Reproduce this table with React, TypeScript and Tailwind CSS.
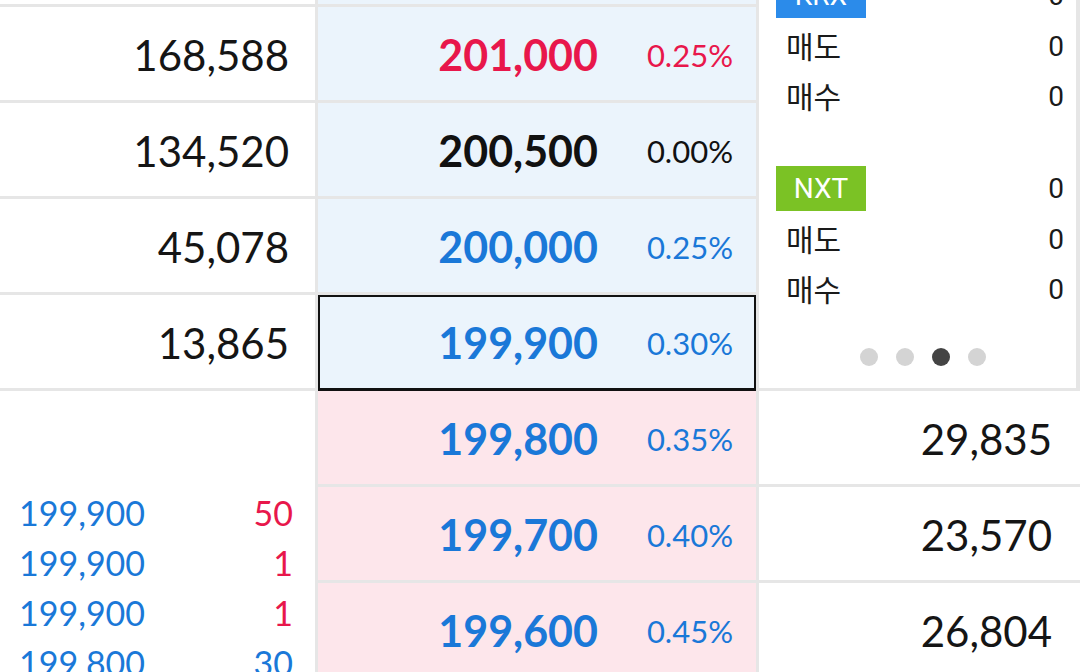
const sellRows = [
  { vol: '', price: '', pct: '' },
  { vol: '168,588', price: '201,000', pct: '0.25%', tone: 'red' },
  { vol: '134,520', price: '200,500', pct: '0.00%', tone: 'black' },
  { vol: '45,078', price: '200,000', pct: '0.25%', tone: 'blue' },
  { vol: '13,865', price: '199,900', pct: '0.30%', tone: 'blue', selected: true },
]

const buyRows = [
  { vol: '29,835', price: '199,800', pct: '0.35%' },
  { vol: '23,570', price: '199,700', pct: '0.40%' },
  { vol: '26,804', price: '199,600', pct: '0.45%' },
]

const trades = [
  { price: '199,900', qty: '50', up: true },
  { price: '199,900', qty: '1', up: true },
  { price: '199,900', qty: '1', up: true },
  { price: '199,800', qty: '30', up: false },
]

const toneText: Record<string, string> = {
  red: 'text-[#e8174b]',
  black: 'text-[#111111]',
  blue: 'text-[#1a78d8]',
}

function Market({ label, badge }: { label: string; badge: string }) {
  return (
    <div className="flex flex-col">
      <div className="flex h-[45px] items-center justify-between">
        <span className={`flex h-[45px] w-[90px] items-center justify-center text-[28px] text-white ${badge}`}>{label}</span>
        <span className="text-[28px] text-[#1a1a1a]">0</span>
      </div>
      <div className="mt-[4px] flex h-[50px] items-center justify-between pl-[10px] text-[28px] text-[#1a1a1a]">
        <span className="text-[30px]">매도</span>
        <span>0</span>
      </div>
      <div className="flex h-[50px] items-center justify-between pl-[10px] text-[28px] text-[#1a1a1a]">
        <span className="text-[30px]">매수</span>
        <span>0</span>
      </div>
    </div>
  )
}

export default function App() {
  return (
    <div className="h-[672px] w-[1080px] overflow-hidden bg-white font-['Lato',sans-serif]">
      <div className="-mt-[89px] flex">
        {/* LEFT: volumes + trades */}
        <div className="flex w-[318px] flex-col border-r-[3px] border-[#e6e6e6]">
          {sellRows.map((r, i) => (
            <div key={i} className="flex h-[96px] items-center justify-end border-b-[3px] border-[#e6e6e6] pt-[3px] pr-[26px] text-[42px] text-[#151515]">
              {r.vol}
            </div>
          ))}
          <div className="flex flex-col pt-[96px] pl-[19px] pr-[22px]">
            {trades.map((t, i) => (
              <div key={i} className="flex h-[50px] items-center justify-between text-[34px]">
                <span className="text-[#1a78d8]">{t.price}</span>
                <span className={t.up ? 'text-[#e8174b]' : 'text-[#1a78d8]'}>{t.qty}</span>
              </div>
            ))}
          </div>
        </div>

        {/* MIDDLE: prices */}
        <div className="flex w-[441px] flex-col border-r-[3px] border-[#e6e6e6]">
          {sellRows.map((r, i) => (
            <div
              key={i}
              className={`flex h-[96px] items-center justify-end border-b-[3px] bg-[#ebf4fc] pt-[3px] pr-[23px] ${
                r.selected ? 'border-[#111111] shadow-[inset_0_2px_0_#111111,inset_2px_0_0_#111111,inset_-2px_0_0_#111111]' : 'border-[#e6e6e6]'
              }`}
            >
              <span className={`text-[43px] font-bold ${toneText[r.tone ?? 'black']}`}>{r.price}</span>
              <span className={`w-[135px] text-right text-[31px] ${toneText[r.tone ?? 'black']}`}>{r.pct}</span>
            </div>
          ))}
          {buyRows.map((r, i) => (
            <div key={i} className="flex h-[96px] items-center justify-end border-b-[3px] border-[#e6e6e6] bg-[#fde6eb] pt-[3px] pr-[23px]">
              <span className="text-[43px] font-bold text-[#1a78d8]">{r.price}</span>
              <span className="w-[135px] text-right text-[31px] text-[#1a78d8]">{r.pct}</span>
            </div>
          ))}
        </div>

        {/* RIGHT: market panel + volumes */}
        <div className="flex flex-1 flex-col">
          <div className="flex h-[480px] flex-col border-r-[4px] border-b-[3px] border-[#e6e6e6] pt-[62px] pl-[17px] pr-[12px] font-['Roboto','Noto_Sans_CJK_KR',sans-serif]">
            <Market label="KRX" badge="bg-[#2b8bea]" />
            <div className="h-[44px]" />
            <Market label="NXT" badge="bg-[#7bc225]" />
            <div className="mt-[33px] flex justify-center gap-[18px] pl-[6px]">
              <span className="h-[18px] w-[18px] rounded-full bg-[#d4d4d4]" />
              <span className="h-[18px] w-[18px] rounded-full bg-[#d4d4d4]" />
              <span className="h-[18px] w-[18px] rounded-full bg-[#444444]" />
              <span className="h-[18px] w-[18px] rounded-full bg-[#d4d4d4]" />
            </div>
          </div>
          {buyRows.map((r, i) => (
            <div key={i} className="flex h-[96px] items-center justify-end border-b-[3px] border-[#e6e6e6] pt-[3px] pr-[28px] text-[42px] text-[#151515]">
              {r.vol}
            </div>
          ))}
        </div>
      </div>
    </div>
  )
}
